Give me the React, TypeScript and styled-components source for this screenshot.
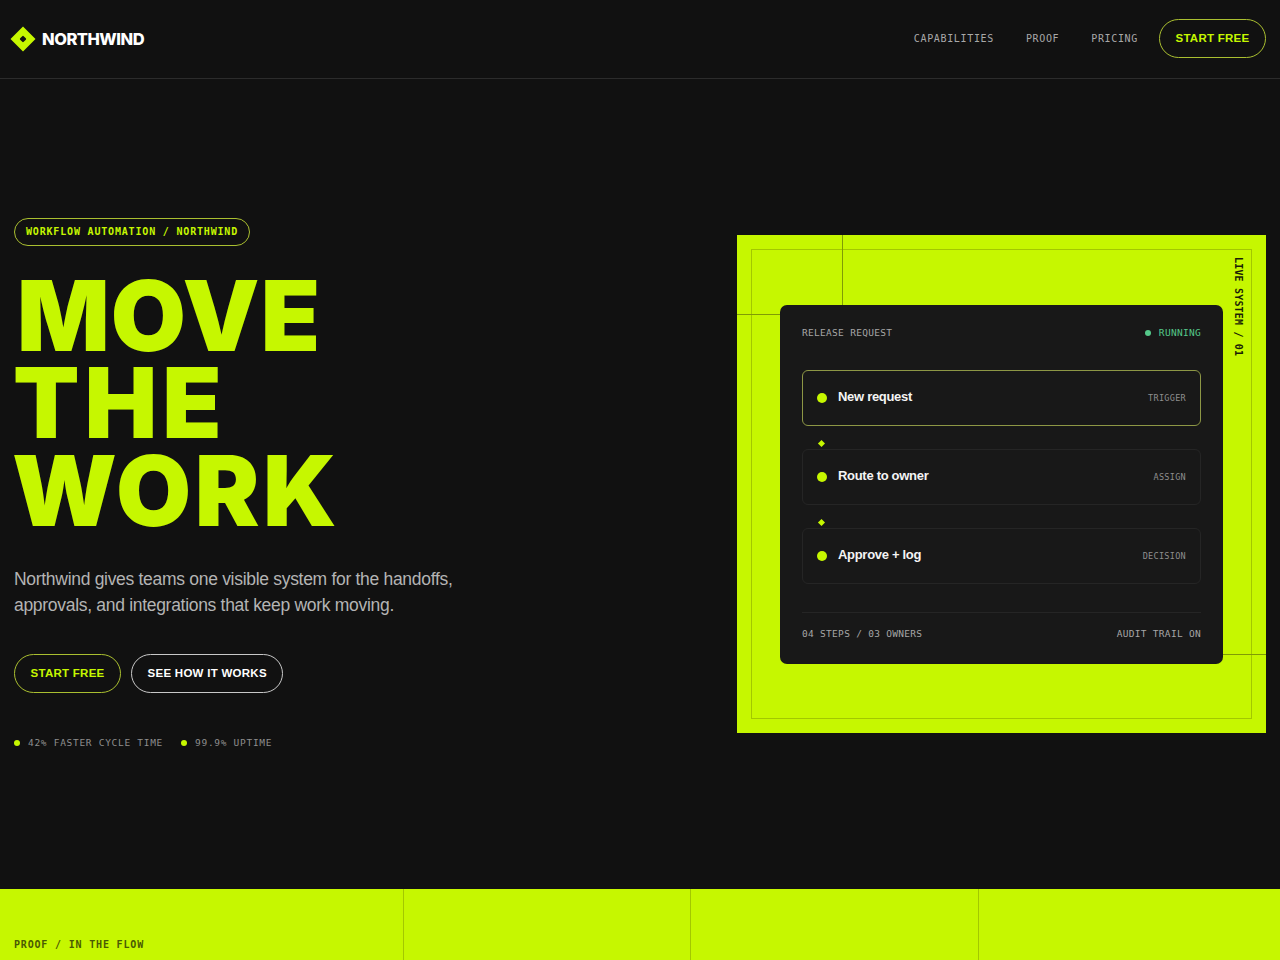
import React from 'react';
import styled, { createGlobalStyle } from 'styled-components';

const LIME = '#c6f700';
const INK = '#111111';
const MONO = '"DejaVu Sans Mono", "Liberation Mono", monospace';
const SANS = '"Liberation Sans", Arial, sans-serif';
const DISPLAY = 'Inter, "Liberation Sans", sans-serif';

const steps = [
    { name: 'New request', tag: 'TRIGGER', active: true },
    { name: 'Route to owner', tag: 'ASSIGN', active: false },
    { name: 'Approve + log', tag: 'DECISION', active: false },
];

const App = () => {
    return (
        <Page>
            <GlobalStyle />
            <Header>
                <Brand>
                    <svg width="26" height="26" viewBox="0 0 26 26">
                        <path d="M13 0.5 L25.5 13 L13 25.5 L0.5 13 Z" fill={LIME} />
                        <rect x="10.5" y="10.5" width="5" height="5" rx="1" transform="rotate(45 13 13)" fill={INK} />
                    </svg>
                    <BrandName>NORTHWIND</BrandName>
                </Brand>
                <Nav>
                    <NavLink>CAPABILITIES</NavLink>
                    <NavLink>PROOF</NavLink>
                    <NavLink>PRICING</NavLink>
                    <PillButton $tone="lime" $navItem>START FREE</PillButton>
                </Nav>
            </Header>

            <Hero>
                <Intro>
                    <Eyebrow>WORKFLOW AUTOMATION / NORTHWIND</Eyebrow>
                    <Title>
                        <TitleLine $indent={3} $tracking={1}>MOVE</TitleLine>
                        <TitleLine $indent={-1} $tracking={5}>THE</TitleLine>
                        <TitleLine $indent={-2} $tracking={3.5}>WORK</TitleLine>
                    </Title>
                    <Lead>
                        Northwind gives teams one visible system for the handoffs,
                        <br />
                        approvals, and integrations that keep work moving.
                    </Lead>
                    <Actions>
                        <PillButton $tone="lime">START FREE</PillButton>
                        <PillButton $tone="white">SEE HOW IT WORKS</PillButton>
                    </Actions>
                    <Stats>
                        <Stat>42% FASTER CYCLE TIME</Stat>
                        <Stat>99.9% UPTIME</Stat>
                    </Stats>
                </Intro>

                <Visual>
                    <InnerFrame />
                    <LineVertical />
                    <LineLeft />
                    <LineRight />
                    <SideLabel>LIVE SYSTEM / 01</SideLabel>
                    <Card>
                        <CardHead>
                            <MonoLabel>RELEASE REQUEST</MonoLabel>
                            <Running>RUNNING</Running>
                        </CardHead>
                        <StepList>
                            {steps.map((step) => (
                                <Step key={step.name} $active={step.active}>
                                    <StepDot />
                                    <StepName>{step.name}</StepName>
                                    <StepTag>{step.tag}</StepTag>
                                </Step>
                            ))}
                        </StepList>
                        <CardFoot>
                            <MonoLabel>04 STEPS / 03 OWNERS</MonoLabel>
                            <MonoLabel>AUDIT TRAIL ON</MonoLabel>
                        </CardFoot>
                    </Card>
                </Visual>
            </Hero>

            <Strip>
                <StripCell>
                    <StripLabel>PROOF / IN THE FLOW</StripLabel>
                </StripCell>
                <StripCell />
                <StripCell />
                <StripCell />
            </Strip>
        </Page>
    );
};

export default App;

const GlobalStyle = createGlobalStyle`
    * {
        box-sizing: border-box;
    }
    html,
    body {
        margin: 0;
        background: ${INK};
    }
`;

const Page = styled.div`
    display: flex;
    flex-direction: column;
    height: 960px;
    overflow: hidden;
    background: ${INK};
    color: #fff;
    font-family: ${SANS};
`;

const Header = styled.header`
    display: flex;
    align-items: center;
    justify-content: space-between;
    flex: 0 0 79px;
    padding: 0 14px 1px 10px;
    border-bottom: 1px solid #2c2c2c;
`;

const Brand = styled.div`
    display: flex;
    align-items: center;
    gap: 6px;
`;

const BrandName = styled.span`
    font-family: ${DISPLAY};
    font-size: 16.5px;
    font-weight: 800;
    letter-spacing: -0.03em;
`;

const Nav = styled.nav`
    display: flex;
    align-items: center;
    gap: 32px;
`;

const NavLink = styled.a`
    font-family: ${MONO};
    font-size: 10px;
    letter-spacing: 0.65px;
    color: #a8a8a8;
`;

const PillButton = styled.button<{ $tone: 'lime' | 'white'; $navItem?: boolean }>`
    height: 39px;
    padding: 0 15.5px 2px;
    margin-left: ${(p) => (p.$navItem ? '-11px' : '0')};
    border: 1px solid ${(p) => (p.$tone === 'lime' ? '#aabf30' : '#c8c8c8')};
    border-radius: 20px;
    background: transparent;
    color: ${(p) => (p.$tone === 'lime' ? LIME : '#fff')};
    font-family: ${SANS};
    font-size: 11.5px;
    font-weight: 700;
    letter-spacing: 0.27px;
`;

const Hero = styled.main`
    display: grid;
    grid-template-columns: 1fr 529px;
    align-items: center;
    flex: 0 0 810px;
    padding: 0 14px;
`;

const Intro = styled.div`
    display: flex;
    flex-direction: column;
    align-items: flex-start;
    padding-bottom: 2px;
`;

const Eyebrow = styled.div`
    display: flex;
    align-items: center;
    height: 28px;
    padding: 0 11px;
    border: 1px solid #aabf30;
    border-radius: 14px;
    color: ${LIME};
    font-family: ${MONO};
    font-size: 10px;
    font-weight: 700;
    letter-spacing: 0.82px;
`;

const Title = styled.h1`
    margin: 26px 0 32px;
    color: ${LIME};
    font-family: ${DISPLAY};
    font-size: 97px;
    font-weight: 900;
    line-height: 87.5px;
`;

const TitleLine = styled.span<{ $indent: number; $tracking: number }>`
    display: block;
    margin-left: ${(p) => p.$indent}px;
    letter-spacing: ${(p) => p.$tracking}px;
`;

const Lead = styled.p`
    margin: 0 0 36px;
    color: #b4b4b4;
    font-size: 17.5px;
    letter-spacing: -0.3px;
    line-height: 26px;
`;

const Actions = styled.div`
    display: flex;
    gap: 10px;
`;

const Stats = styled.div`
    display: flex;
    gap: 18px;
    margin-top: 44px;
`;

const Stat = styled.span`
    display: flex;
    align-items: center;
    gap: 8px;
    color: #8e8e8e;
    font-family: ${MONO};
    font-size: 9.5px;
    letter-spacing: 0.71px;

    &::before {
        content: '';
        width: 6px;
        height: 6px;
        border-radius: 50%;
        background: ${LIME};
    }
`;

const Visual = styled.div`
    position: relative;
    display: flex;
    align-items: center;
    justify-content: center;
    height: 498px;
    background: ${LIME};
`;

const InnerFrame = styled.div`
    position: absolute;
    inset: 14px;
    border: 1px solid #a3c800;
`;

const LineVertical = styled.div`
    position: absolute;
    top: 0;
    left: 105px;
    width: 1px;
    height: 70px;
    background: #7f9c05;
`;

const LineLeft = styled.div`
    position: absolute;
    top: 79px;
    left: 0;
    width: 43px;
    height: 1px;
    background: #7f9c05;
`;

const LineRight = styled.div`
    position: absolute;
    top: 419px;
    right: 0;
    width: 43px;
    height: 1px;
    background: #7f9c05;
`;

const SideLabel = styled.div`
    position: absolute;
    top: 22px;
    right: 22px;
    color: #1b1f05;
    font-family: ${MONO};
    font-size: 10px;
    font-weight: 700;
    letter-spacing: 0.18px;
    writing-mode: vertical-rl;
`;

const Card = styled.section`
    position: relative;
    display: flex;
    flex-direction: column;
    width: 443px;
    height: 359px;
    padding: 0 22px;
    border-radius: 7px;
    background: #181818;
`;

const CardHead = styled.div`
    display: flex;
    align-items: center;
    justify-content: space-between;
    height: 65px;
    padding-bottom: 9px;
`;

const MonoLabel = styled.span`
    color: #a6a6a6;
    font-family: ${MONO};
    font-size: 9.5px;
    letter-spacing: 0.3px;
`;

const Running = styled.span`
    display: flex;
    align-items: center;
    gap: 8px;
    color: #55c98a;
    font-family: ${MONO};
    font-size: 9.5px;
    letter-spacing: 0.3px;

    &::before {
        content: '';
        width: 6px;
        height: 6px;
        border-radius: 50%;
        background: #55c98a;
    }
`;

const StepList = styled.div`
    display: flex;
    flex-direction: column;
    gap: 23px;
`;

const Step = styled.div<{ $active: boolean }>`
    position: relative;
    display: flex;
    align-items: center;
    height: 56px;
    padding: 0 14px;
    border: 1px solid ${(p) => (p.$active ? '#8d9745' : '#252525')};
    border-radius: 6px;

    &:not(:first-child)::before {
        content: '';
        position: absolute;
        top: -9px;
        left: 16px;
        width: 5px;
        height: 5px;
        background: ${LIME};
        transform: rotate(45deg);
    }
`;

const StepDot = styled.span`
    width: 10px;
    height: 10px;
    margin-right: 11px;
    border-radius: 50%;
    background: ${LIME};
`;

const StepName = styled.span`
    flex: 1;
    padding-bottom: 2px;
    color: #f4f4f4;
    font-size: 13px;
    font-weight: 700;
    letter-spacing: -0.3px;
`;

const StepTag = styled.span`
    color: #8e8e8e;
    font-family: ${MONO};
    font-size: 8.5px;
    letter-spacing: 0.3px;
`;

const CardFoot = styled.div`
    display: flex;
    align-items: center;
    justify-content: space-between;
    height: 43px;
    margin-top: 28px;
    border-top: 1px solid #252525;
`;

const Strip = styled.section`
    display: grid;
    grid-template-columns: 1.35fr 1fr 1fr 1fr;
    flex: 1;
    padding: 0 14px;
    background: ${LIME};
`;

const StripCell = styled.div`
    display: flex;
    align-items: flex-end;
    padding-bottom: 10px;

    & + & {
        border-left: 1px solid #a3c800;
    }
`;

const StripLabel = styled.span`
    color: #4a5a04;
    font-family: ${MONO};
    font-size: 10px;
    font-weight: 700;
    letter-spacing: 0.82px;
`;
